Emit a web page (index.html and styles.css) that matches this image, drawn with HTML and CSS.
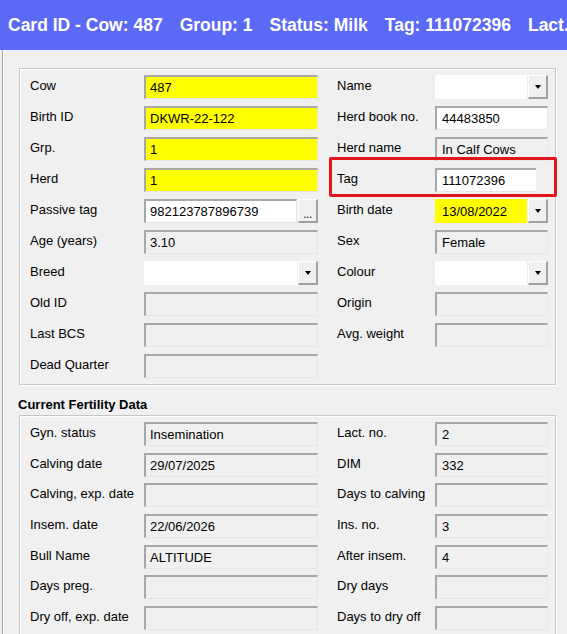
FILE: index.html
```html
<!DOCTYPE html>
<html>
<head>
<meta charset="utf-8">
<title>Card ID</title>
<link rel="stylesheet" href="styles.css">
</head>
<body>
<div class="titlebar">
  <span>Card ID - Cow: 487</span>
  <span>Group: 1</span>
  <span>Status: Milk</span>
  <span>Tag: 111072396</span>
  <span>Lact. no.: 2</span>
</div>
<div class="window">
  <div class="group g1">
    <div class="grid">
      <div class="lbl">Cow</div>
      <div class="fld yellow">487</div>
      <div class="lbl r">Name</div>
      <div class="combo"><span class="val white"></span><span class="btn"><i class="arrow"></i></span></div>

      <div class="lbl">Birth ID</div>
      <div class="fld yellow">DKWR-22-122</div>
      <div class="lbl r">Herd book no.</div>
      <div class="fld white rv">44483850</div>

      <div class="lbl">Grp.</div>
      <div class="fld yellow">1</div>
      <div class="lbl r">Herd name</div>
      <div class="fld rv">In Calf Cows</div>

      <div class="lbl">Herd</div>
      <div class="fld yellow">1</div>
      <div class="lbl r">Tag<span class="hl"></span></div>
      <div class="fld white rv short">111072396</div>

      <div class="lbl">Passive tag</div>
      <div class="combo"><span class="fld white">982123787896739</span><span class="btn dots">...</span></div>
      <div class="lbl r">Birth date</div>
      <div class="combo"><span class="val yellow">13/08/2022</span><span class="btn"><i class="arrow"></i></span></div>

      <div class="lbl">Age (years)</div>
      <div class="fld">3.10</div>
      <div class="lbl r">Sex</div>
      <div class="fld rv">Female</div>

      <div class="lbl">Breed</div>
      <div class="combo"><span class="val white"></span><span class="btn"><i class="arrow"></i></span></div>
      <div class="lbl r">Colour</div>
      <div class="combo"><span class="val white"></span><span class="btn"><i class="arrow"></i></span></div>

      <div class="lbl">Old ID</div>
      <div class="fld"></div>
      <div class="lbl r">Origin</div>
      <div class="fld rv"></div>

      <div class="lbl">Last BCS</div>
      <div class="fld"></div>
      <div class="lbl r">Avg. weight</div>
      <div class="fld rv"></div>

      <div class="lbl">Dead Quarter</div>
      <div class="fld"></div>
      <div></div>
      <div></div>
    </div>
  </div>

  <div class="sec-title">Current Fertility Data</div>
  <div class="group g2">
    <div class="grid">
      <div class="lbl">Gyn. status</div>
      <div class="fld">Insemination</div>
      <div class="lbl r">Lact. no.</div>
      <div class="fld rv">2</div>

      <div class="lbl">Calving date</div>
      <div class="fld">29/07/2025</div>
      <div class="lbl r">DIM</div>
      <div class="fld rv">332</div>

      <div class="lbl">Calving, exp. date</div>
      <div class="fld"></div>
      <div class="lbl r">Days to calving</div>
      <div class="fld rv"></div>

      <div class="lbl">Insem. date</div>
      <div class="fld">22/06/2026</div>
      <div class="lbl r">Ins. no.</div>
      <div class="fld rv">3</div>

      <div class="lbl">Bull Name</div>
      <div class="fld">ALTITUDE</div>
      <div class="lbl r">After insem.</div>
      <div class="fld rv">4</div>

      <div class="lbl">Days preg.</div>
      <div class="fld"></div>
      <div class="lbl r">Dry days</div>
      <div class="fld rv"></div>

      <div class="lbl">Dry off, exp. date</div>
      <div class="fld"></div>
      <div class="lbl r">Days to dry off</div>
      <div class="fld rv"></div>
    </div>
  </div>
</div>
</body>
</html>
```

FILE: styles.css
```css
* {
  box-sizing: border-box;
}

body {
  margin: 0;
  background: #f0f0f0;
  font-family: "Liberation Sans", Arial, sans-serif;
  font-size: 13px;
  color: #000;
  overflow: hidden;
}

.titlebar {
  height: 50px;
  background: #5b6af6;
  color: #fff;
  display: flex;
  align-items: center;
  gap: 17px;
  padding-left: 8px;
  font-size: 17.5px;
  font-weight: bold;
  white-space: nowrap;
  overflow: hidden;
}

.titlebar span {
  flex: none;
}

.window {
  margin-left: 2px;
  border-left: 1px solid #a6a6a6;
  box-shadow: inset 1px 0 0 #ffffff;
  padding-left: 16px;
  padding-top: 18px;
  min-height: 584px;
}

.group {
  width: 537px;
  border: 1px solid #c6c6c6;
  box-shadow: inset 1px 1px 0 #ffffff, 1px 1px 0 #ffffff;
  padding: 6px 7px 6px 10px;
}

.grid {
  display: grid;
  grid-template-columns: 114px 174px 117px 113px;
  grid-auto-rows: 24px;
  row-gap: 7px;
}

.g2 .grid {
  row-gap: 6.67px;
}

.lbl {
  display: flex;
  align-items: center;
  padding-bottom: 3px;
  white-space: nowrap;
}

.lbl.r {
  padding-left: 19px;
  position: relative;
}

.fld {
  display: flex;
  align-items: center;
  border-style: solid;
  border-width: 2px 1px 1px 2px;
  border-color: #a8a8a8 #e6e6e6 #e6e6e6 #a8a8a8;
  padding-left: 4px;
  background: #f0f0f0;
  overflow: hidden;
  white-space: nowrap;
}

.fld.rv {
  padding-left: 5px;
}

.fld.short {
  width: 101px;
  border-right: none;
}

.yellow {
  background: #ffff00;
}

.white {
  background: #ffffff;
}

.combo {
  display: flex;
}

.combo .fld {
  flex: 1;
}

.combo .val {
  flex: 1;
  display: flex;
  align-items: center;
  padding-left: 7px;
}

.btn {
  flex: none;
  width: 20px;
  margin-left: 1px;
  background: #f0f0f0;
  border-style: solid;
  border-width: 1px 2px 2px 1px;
  border-color: #ffffff #a0a0a0 #a0a0a0 #ffffff;
  display: flex;
  align-items: center;
  justify-content: center;
}

.arrow {
  width: 0;
  height: 0;
  border-left: 3.5px solid transparent;
  border-right: 3.5px solid transparent;
  border-top: 4px solid #000;
  margin-top: 1px;
}

.dots {
  align-items: flex-end;
  font-size: 12px;
  line-height: 14px;
  letter-spacing: -0.5px;
}

.hl {
  position: absolute;
  left: 11px;
  top: -11px;
  width: 228px;
  height: 40px;
  border: 3px solid #e3141b;
  border-radius: 2px;
  pointer-events: none;
}

.sec-title {
  font-weight: bold;
  line-height: 16px;
  margin: 12px 0 2px -1px;
}
```
